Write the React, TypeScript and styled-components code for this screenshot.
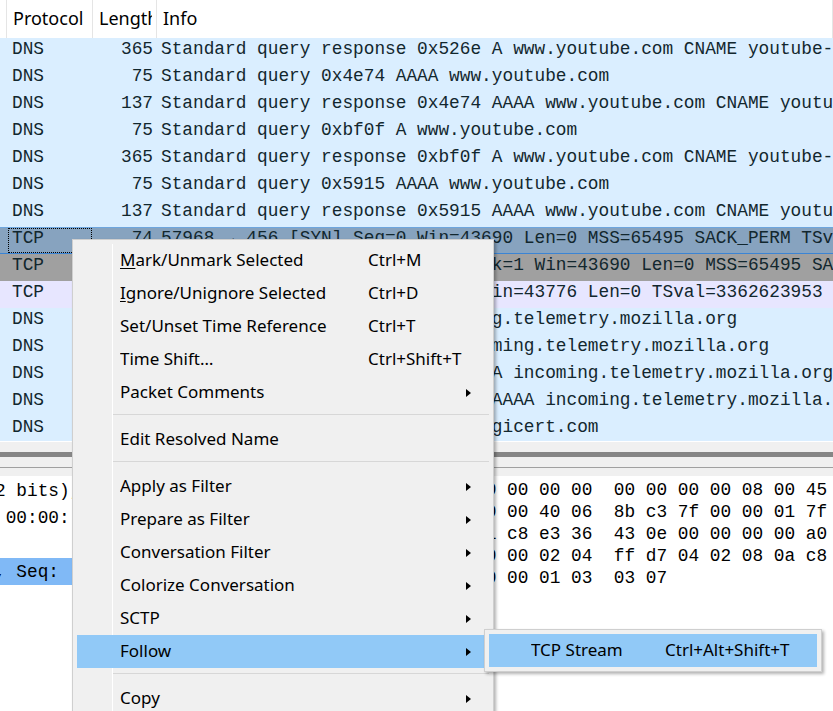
import React from "react";
import styled, { createGlobalStyle, css } from "styled-components";

const mono = `"Liberation Mono", "DejaVu Sans Mono", monospace`;
const ui = `"Noto Sans", "Open Sans", sans-serif`;

const GlobalStyle = createGlobalStyle`
  html, body {
    margin: 0;
    padding: 0;
    background: #f0f0f0;
    overflow: hidden;
  }
`;

type Kind = "udp" | "tcp" | "syn" | "sel";

type Packet = {
  proto: string;
  len: number;
  info: string;
  kind: Kind;
};

const packets: Packet[] = [
  { proto: "DNS", len: 365, kind: "udp", info: "Standard query response 0x526e A www.youtube.com CNAME youtube-ui.l.google.com A 142.250.180.14" },
  { proto: "DNS", len: 75, kind: "udp", info: "Standard query 0x4e74 AAAA www.youtube.com" },
  { proto: "DNS", len: 137, kind: "udp", info: "Standard query response 0x4e74 AAAA www.youtube.com CNAME youtube-ui.l.google.com AAAA 2a00:1450:4017:80b::200e" },
  { proto: "DNS", len: 75, kind: "udp", info: "Standard query 0xbf0f A www.youtube.com" },
  { proto: "DNS", len: 365, kind: "udp", info: "Standard query response 0xbf0f A www.youtube.com CNAME youtube-ui.l.google.com A 142.250.180.14" },
  { proto: "DNS", len: 75, kind: "udp", info: "Standard query 0x5915 AAAA www.youtube.com" },
  { proto: "DNS", len: 137, kind: "udp", info: "Standard query response 0x5915 AAAA www.youtube.com CNAME youtube-ui.l.google.com AAAA 2a00:1450:4017:80b::200e" },
  { proto: "TCP", len: 74, kind: "sel", info: "57968 → 456 [SYN] Seq=0 Win=43690 Len=0 MSS=65495 SACK_PERM TSval=3362623953 TSecr=0 WS=128" },
  { proto: "TCP", len: 74, kind: "syn", info: "456 → 57968 [SYN, ACK] Seq=0 Ack=1 Win=43690 Len=0 MSS=65495 SACK_PERM TSval=3362623953" },
  { proto: "TCP", len: 66, kind: "tcp", info: "57968 → 456 [ACK] Seq=1 Ack=1 Win=43776 Len=0 TSval=3362623953 TSecr=3362623953" },
  { proto: "DNS", len: 86, kind: "udp", info: "Standard query 0x1c2d A incoming.telemetry.mozilla.org" },
  { proto: "DNS", len: 86, kind: "udp", info: "Standard query 0x8e51 AAAA incoming.telemetry.mozilla.org" },
  { proto: "DNS", len: 188, kind: "udp", info: "Standard query response 0x1c2d A incoming.telemetry.mozilla.org CNAME telemetry-incoming.r53-2.services.mozilla.com" },
  { proto: "DNS", len: 213, kind: "udp", info: "Standard query response 0x8e51 AAAA incoming.telemetry.mozilla.org CNAME telemetry-incoming.r53-2.services.mozilla.com" },
  { proto: "DNS", len: 75, kind: "udp", info: "Standard query 0x3a1b A ocsp.digicert.com" },
];

const details = [
  { text: "2 bits), 74 bytes captured (592 bits) on interface \\Device\\NPF_Loopback, id 0" },
  { text: " 00:00: (00:00:00:00:00:00), Dst: 00:00:00_00:00:00 (00:00:00:00:00:00)" },
  { text: "" },
  { text: ", Seq:  0, Len: 0", selected: true },
];

const hexLines = [
  "0000  00 00 00 00 00 00 00 00  00 00 00 00 08 00 45 00   ..............E.",
  "0010  00 3c 5d 3b 40 00 40 06  8b c3 7f 00 00 01 7f 00   .<];@.@.........",
  "0020  00 01 e2 70 01 c8 e3 36  43 0e 00 00 00 00 a0 02   ...p...6C.......",
  "0030  aa aa fe 30 00 00 02 04  ff d7 04 02 08 0a c8 69   ...0...........i",
  "0040  0c 11 00 00 00 00 01 03  03 07                     ..........",
];

type MenuEntry =
  | { sep: true }
  | {
      sep?: false;
      label: string;
      mnemonic?: number;
      shortcut?: string;
      sub?: boolean;
      active?: boolean;
    };

const menuEntries: MenuEntry[] = [
  { label: "Mark/Unmark Selected", mnemonic: 0, shortcut: "Ctrl+M" },
  { label: "Ignore/Unignore Selected", mnemonic: 0, shortcut: "Ctrl+D" },
  { label: "Set/Unset Time Reference", shortcut: "Ctrl+T" },
  { label: "Time Shift…", shortcut: "Ctrl+Shift+T" },
  { label: "Packet Comments", sub: true },
  { sep: true },
  { label: "Edit Resolved Name" },
  { sep: true },
  { label: "Apply as Filter", sub: true },
  { label: "Prepare as Filter", sub: true },
  { label: "Conversation Filter", sub: true },
  { label: "Colorize Conversation", sub: true },
  { label: "SCTP", sub: true },
  { label: "Follow", sub: true, active: true },
  { sep: true },
  { label: "Copy", sub: true },
  { sep: true },
  { label: "Protocol Preferences", sub: true },
  { label: "Decode As…" },
  { label: "Show Packet in New Window" },
];

const rowColors: Record<Kind, string> = {
  udp: "#daeeff",
  tcp: "#e7e6ff",
  syn: "#a0a0a0",
  sel: "#87a3bf",
};

const Screen = styled.div`
  position: relative;
  width: 833px;
  height: 711px;
  overflow: hidden;
  background: #f0f0f0;
  display: flex;
  flex-direction: column;
`;

const ListHeader = styled.div`
  display: flex;
  flex-shrink: 0;
  height: 38px;
  background: #fff;
  font-family: ${ui};
  font-size: 18px;
  color: #000;
`;

const HeaderCell = styled.div<{ $w?: number }>`
  ${({ $w }) => ($w ? `width: ${$w}px; flex-shrink: 0;` : `flex: 1;`)}
  box-sizing: border-box;
  padding: 0 4px 0 6px;
  line-height: 37px;
  border-right: 1px solid #e5e5e5;
  white-space: nowrap;
  overflow: hidden;
`;

const HeaderLabel = styled.span`
  display: block;
  overflow: hidden;
`;

const HeaderLead = styled.div`
  width: 7px;
  flex-shrink: 0;
  box-sizing: border-box;
  border-right: 1px solid #e5e5e5;
`;

const ListBody = styled.div`
  flex-shrink: 0;
  height: 403px;
  overflow: hidden;
  border-bottom: 1px solid #fff;
`;

const Row = styled.div<{ $kind: Kind }>`
  display: flex;
  height: 27px;
  background: ${({ $kind }) => rowColors[$kind]};
  font-family: ${mono};
  font-size: 17.8px;
  color: #12272e;
  white-space: nowrap;
  ${({ $kind }) =>
    $kind === "sel" &&
    css`
      box-shadow: inset 0 1px 0 #6ea6de, inset 0 -1px 0 #3b84d4;
    `}
`;

const cellBase = css`
  box-sizing: border-box;
  height: 27px;
  line-height: 23px;
  padding-bottom: 4px;
  overflow: hidden;
`;

const LeadCell = styled.div`
  ${cellBase};
  width: 7px;
  flex-shrink: 0;
`;

const ProtoCell = styled.div<{ $focus?: boolean }>`
  ${cellBase};
  width: 86px;
  flex-shrink: 0;
  padding-left: 5px;
  ${({ $focus }) =>
    $focus &&
    css`
      outline: 1px dotted #000;
      outline-offset: -2px;
    `}
`;

const LenCell = styled.div`
  ${cellBase};
  width: 64px;
  flex-shrink: 0;
  padding-right: 4px;
  text-align: right;
`;

const InfoCell = styled.div`
  ${cellBase};
  flex: 1;
  padding-left: 4px;
`;

const HScroll = styled.div`
  flex-shrink: 0;
  height: 25px;
  box-sizing: border-box;
  padding-top: 10px;
`;

const ScrollThumb = styled.div`
  height: 5px;
  background: #868686;
`;

const SplitHandle = styled.div`
  flex-shrink: 0;
  height: 9px;
  box-sizing: border-box;
  border-top: 1px solid #a0a0a0;
`;

const Panes = styled.div`
  flex: 1;
  display: flex;
  min-height: 0;
`;

const DetailPane = styled.div`
  width: 277px;
  flex-shrink: 0;
  background: #fff;
  padding-top: 1px;
  overflow: hidden;
  font-family: ${mono};
  font-size: 17.8px;
  color: #000;
`;

const DetailRow = styled.div<{ $selected?: boolean }>`
  height: 27px;
  box-sizing: border-box;
  padding-top: 2px;
  line-height: 25px;
  white-space: pre;
  text-indent: -5px;
  overflow: hidden;
  background: ${({ $selected }) => ($selected ? "#80b9f6" : "transparent")};
`;

const PaneGap = styled.div`
  width: 3px;
  flex-shrink: 0;
`;

const BytesPane = styled.div`
  flex: 1;
  background: #fff;
  padding: 3px 0 0 3px;
  overflow: hidden;
  font-family: ${mono};
  font-size: 17.8px;
  line-height: 22px;
  color: #000;
  white-space: pre;
`;

const Popup = styled.div<{ $left: number; $top: number; $width: number }>`
  position: absolute;
  left: ${({ $left }) => $left}px;
  top: ${({ $top }) => $top}px;
  width: ${({ $width }) => $width}px;
  box-sizing: border-box;
  background: #f0f0f0;
  border: 1px solid #cfcfcf;
  padding: 4px;
  box-shadow: 2px 2px 3px rgba(0, 0, 0, 0.3);
  font-family: ${ui};
  font-size: 17px;
  color: #000;
`;

const MenuBody = styled.div<{ $gutter: number }>`
  background: linear-gradient(
    to right,
    transparent ${({ $gutter }) => $gutter}px,
    #ffffff ${({ $gutter }) => $gutter}px,
    #ffffff ${({ $gutter }) => $gutter + 1}px,
    transparent ${({ $gutter }) => $gutter + 1}px
  );
`;

const MenuItem = styled.div<{ $cols: string; $active?: boolean }>`
  display: grid;
  grid-template-columns: ${({ $cols }) => $cols};
  height: 33px;
  line-height: 32px;
  white-space: nowrap;
  background: ${({ $active }) => ($active ? "#91c9f7" : "transparent")};
`;

const ItemLabel = styled.span`
  grid-column: 2;
  overflow: hidden;
`;

const Mnemonic = styled.span`
  text-decoration: underline;
  text-underline-offset: 2px;
`;

const ItemShortcut = styled.span`
  grid-column: 3;
`;

const SubArrow = styled.span`
  grid-column: 4;
  align-self: center;
  justify-self: start;
  width: 0;
  height: 0;
  border-left: 5px solid #000;
  border-top: 4.5px solid transparent;
  border-bottom: 4.5px solid transparent;
`;

const MenuSep = styled.div`
  height: 14px;
  box-sizing: border-box;
  padding: 5px 0 0 36px;

  &::after {
    content: "";
    display: block;
    height: 1px;
    background: #d7d7d7;
  }
`;

const MAIN_COLS = "43px 248px 1fr 23px";
const SUB_COLS = "42px 134px 1fr 22px";

const Label = ({ text, mnemonic }: { text: string; mnemonic?: number }) => {
  if (mnemonic === undefined) return <ItemLabel>{text}</ItemLabel>;
  return (
    <ItemLabel>
      {text.slice(0, mnemonic)}
      <Mnemonic>{text[mnemonic]}</Mnemonic>
      {text.slice(mnemonic + 1)}
    </ItemLabel>
  );
};

const ContextMenu = () => (
  <Popup $left={72} $top={239} $width={422}>
    <MenuBody $gutter={35}>
      {menuEntries.map((entry, i) =>
        entry.sep ? (
          <MenuSep key={i} />
        ) : (
          <MenuItem key={i} $cols={MAIN_COLS} $active={entry.active}>
            <Label text={entry.label} mnemonic={entry.mnemonic} />
            {entry.shortcut && <ItemShortcut>{entry.shortcut}</ItemShortcut>}
            {entry.sub && <SubArrow />}
          </MenuItem>
        )
      )}
    </MenuBody>
  </Popup>
);

const FollowMenu = () => (
  <Popup $left={484} $top={629} $width={338}>
    <MenuBody $gutter={34}>
      <MenuItem $cols={SUB_COLS} $active>
        <ItemLabel>TCP Stream</ItemLabel>
        <ItemShortcut>Ctrl+Alt+Shift+T</ItemShortcut>
      </MenuItem>
    </MenuBody>
  </Popup>
);

const PacketList = () => (
  <>
    <ListHeader>
      <HeaderLead />
      <HeaderCell $w={86}>
        <HeaderLabel>Protocol</HeaderLabel>
      </HeaderCell>
      <HeaderCell $w={64}>
        <HeaderLabel>Length</HeaderLabel>
      </HeaderCell>
      <HeaderCell>
        <HeaderLabel>Info</HeaderLabel>
      </HeaderCell>
    </ListHeader>
    <ListBody>
      {packets.map((p, i) => (
        <Row key={i} $kind={p.kind}>
          <LeadCell />
          <ProtoCell $focus={p.kind === "sel"}>{p.proto}</ProtoCell>
          <LenCell>{p.len}</LenCell>
          <InfoCell>{p.info}</InfoCell>
        </Row>
      ))}
    </ListBody>
    <HScroll>
      <ScrollThumb />
    </HScroll>
    <SplitHandle />
  </>
);

const App = () => (
  <>
    <GlobalStyle />
    <Screen>
      <PacketList />
      <Panes>
        <DetailPane>
          {details.map((d, i) => (
            <DetailRow key={i} $selected={d.selected}>
              {d.text}
            </DetailRow>
          ))}
        </DetailPane>
        <PaneGap />
        <BytesPane>{hexLines.join("\n")}</BytesPane>
      </Panes>
      <ContextMenu />
      <FollowMenu />
    </Screen>
  </>
);

export default App;
